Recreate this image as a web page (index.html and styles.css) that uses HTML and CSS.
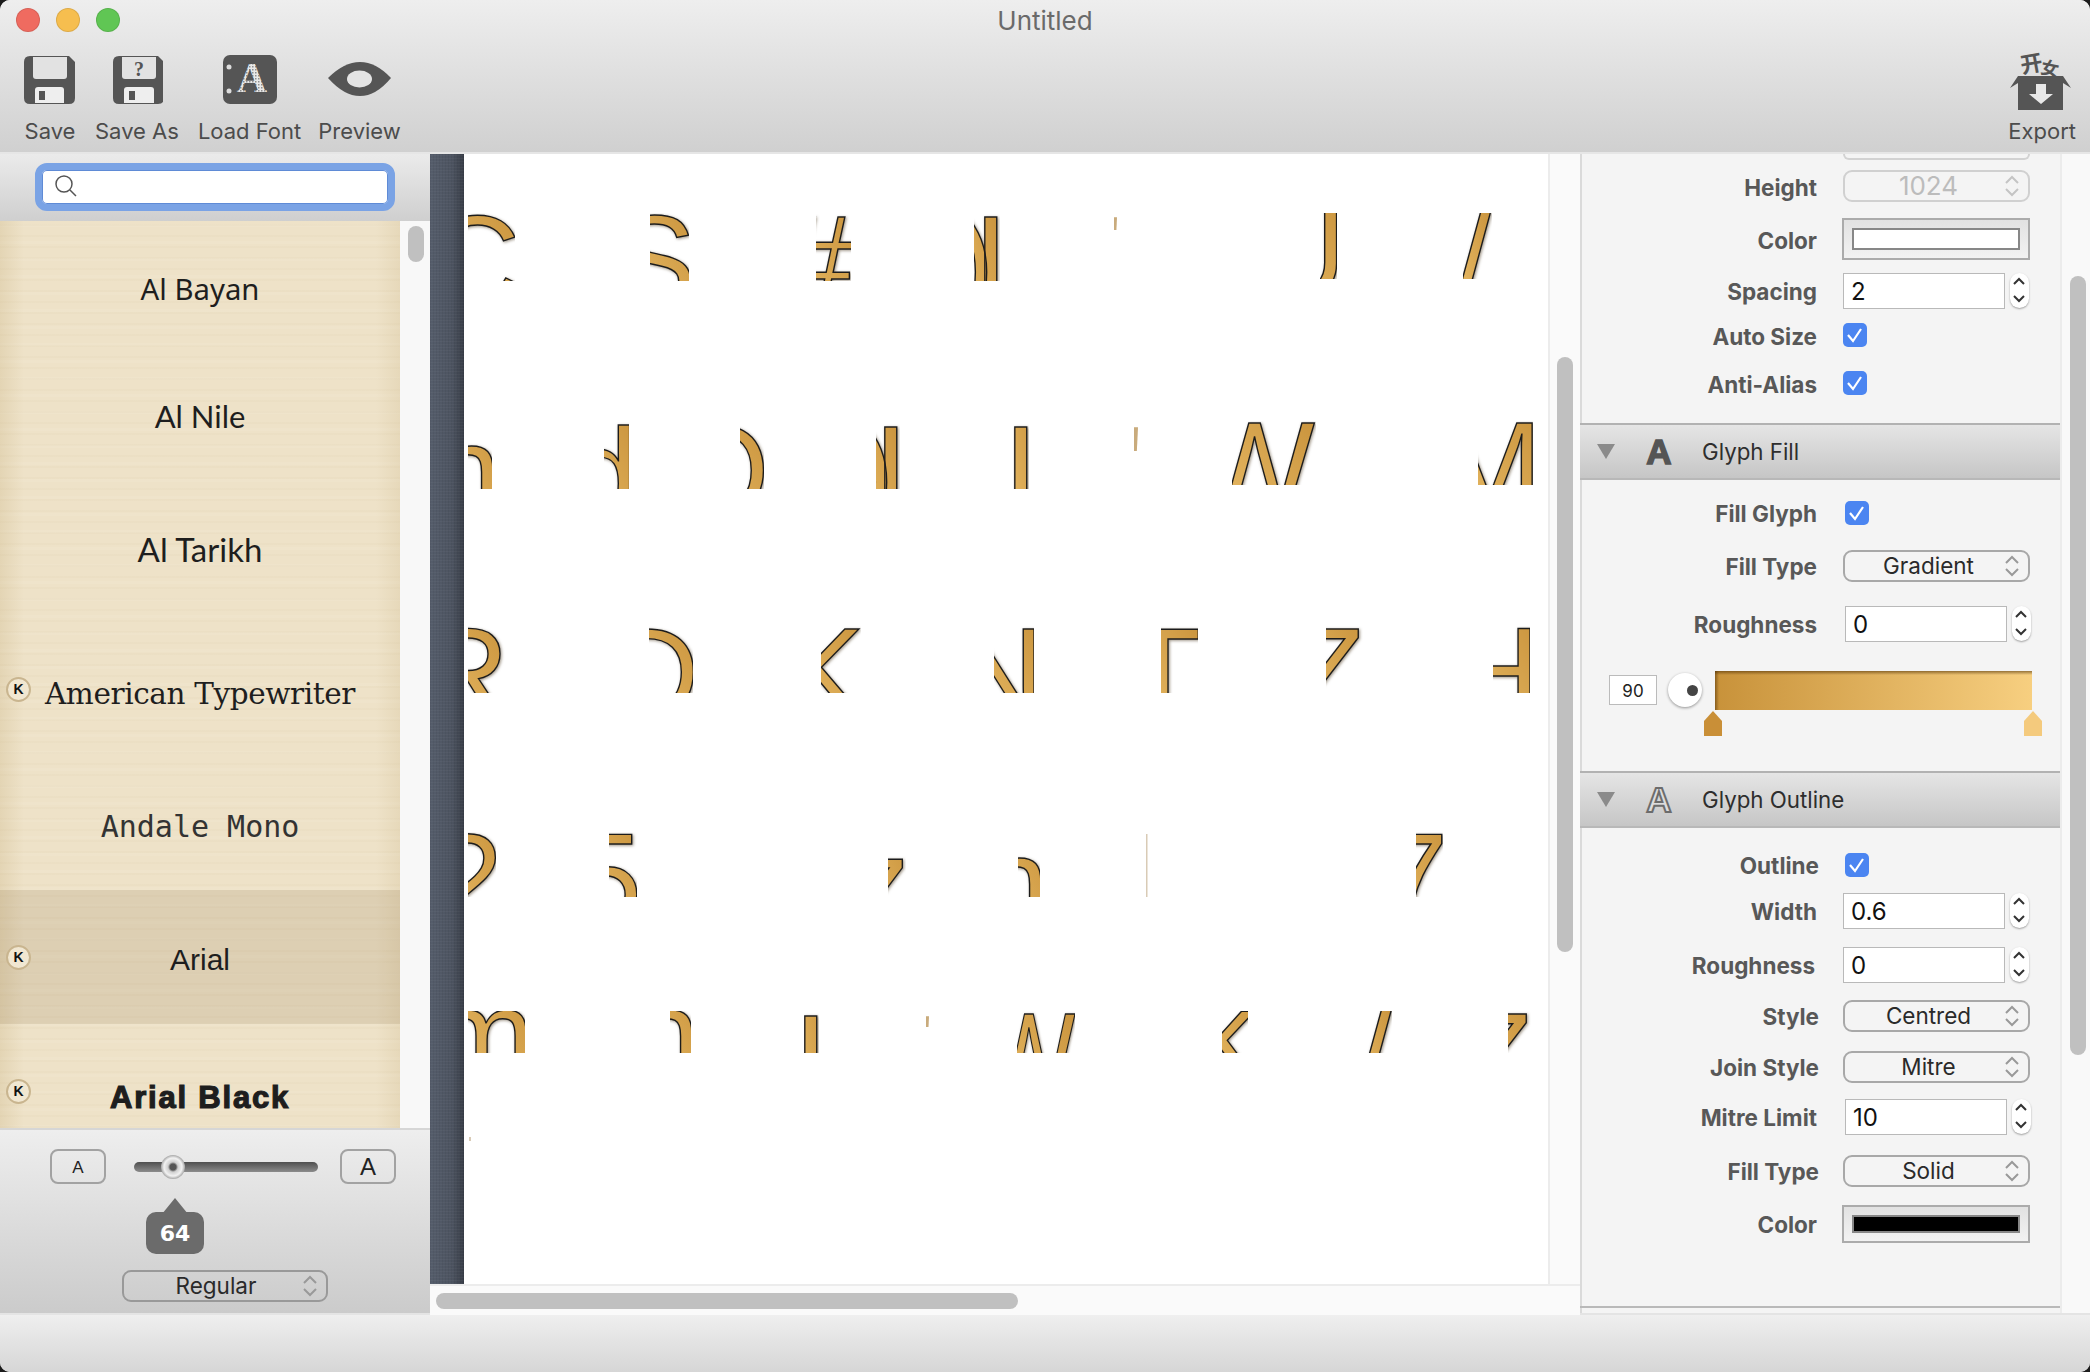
FILE: index.html
```html
<!DOCTYPE html>
<html lang="en">
<head>
  <meta charset="UTF-8">
  <title>Untitled</title>
  <link rel="stylesheet" href="styles.css">
</head>
<body>
<div class="window">

  <header class="top">
    <div class="titlebar">
      <div class="lights"><i class="red"></i><i class="amber"></i><i class="green"></i></div>
      <div class="title">Untitled</div>
    </div>
    <div class="toolbar">
      <div class="tool tool-save">
        <svg width="52" height="62" viewBox="23 48 52 62"><path fill="#555" d="M29 56H68L74 62V98Q74 104 68 104H29Q23 104 23 98V62Q23 56 29 56Z"/><path fill="#e2e2e2" d="M32 57H66V76Q66 79 63 79H35Q32 79 32 76Z"/><path fill="#eee" d="M34 90Q34 87 37 87H60Q63 87 63 90V103H34Z"/><rect fill="#555" x="38" y="91" width="6" height="9"/></svg>
        <span>Save</span>
      </div>
      <div class="tool tool-saveas">
        <svg width="52" height="62" viewBox="111 48 52 62"><path fill="#555" d="M119 56H158L164 62V98Q164 104 158 104H119Q113 104 113 98V62Q113 56 119 56Z"/><path fill="#e2e2e2" d="M122 57H156V76Q156 79 153 79H125Q122 79 122 76Z"/><text class="icon-q" x="134" y="76">?</text><path fill="#eee" d="M124 90Q124 87 127 87H151Q154 87 154 90V103H124Z"/><rect fill="#555" x="129" y="91" width="6" height="9"/></svg>
        <span>Save As</span>
      </div>
      <div class="tool tool-load">
        <svg width="56" height="62" viewBox="222 48 56 62">
          <defs>
            <pattern id="hatch" width="3" height="3" patternUnits="userSpaceOnUse">
              <rect width="3" height="3" fill="#e8e8e8"/>
              <rect width="1.500" height="1.500" fill="#8e8e8e"/>
            </pattern>
          </defs>
          <rect fill="#555" x="223" y="55" width="54" height="49" rx="7"/><circle fill="#ddd" cx="229" cy="67" r="2.500"/><circle fill="#ddd" cx="229" cy="91" r="2.500"/><text class="icon-a" x="252" y="92" fill="url(#hatch)">A</text></svg>
        <span>Load Font</span>
      </div>
      <div class="tool tool-preview">
        <svg width="65" height="62" viewBox="327 48 65 62"><path fill="#555" d="M328 78Q344 62 360 62Q376 62 391 78Q376 96 360 96Q344 96 328 78Z"/><ellipse fill="#e4e4e4" cx="359.500" cy="79" rx="12.500" ry="8.500"/></svg>
        <span>Preview</span>
      </div>
      <div class="tool tool-export">
        <svg width="64" height="62" viewBox="2010 48 64 62"><text class="icon-cjk" x="2020" y="72" transform="rotate(-10 2030 62)">开</text><text class="icon-cjk small" x="2041" y="75" transform="rotate(12 2050 68)">女</text><path fill="#555" d="M2018 76H2063L2071 88L2063 83V110H2018V83L2010 88Z"/><path fill="#e8e8e8" d="M2036 84H2046V94H2053L2041 104L2029 94H2036Z"/></svg>
        <span>Export</span>
      </div>
    </div>
  </header>

  <div class="body">

    <aside class="sidebar">
      <div class="search-zone">
        <div class="search-box">
          <svg width="24" height="24" viewBox="0 0 24 24" fill="none" stroke="#555" stroke-width="1.500"><circle cx="10" cy="10" r="8"/><line x1="16" y1="16" x2="22" y2="22"/></svg>
        </div>
      </div>
      <div class="font-list">
        <div class="paper">
          <div class="font-row"><span class="f-bayan">Al Bayan</span></div>
          <div class="font-row"><span class="f-nile">Al Nile</span></div>
          <div class="font-row"><span class="f-tarikh">Al Tarikh</span></div>
          <div class="font-row"><b class="badge">K</b><span class="f-typewriter">American Typewriter</span></div>
          <div class="font-row"><span class="f-mono">Andale Mono</span></div>
          <div class="font-row selected"><b class="badge">K</b><span class="f-arial">Arial</span></div>
          <div class="font-row"><b class="badge">K</b><span class="f-black">Arial Black</span></div>
        </div>
        <div class="list-scroll"><div class="list-thumb"></div></div>
      </div>
      <div class="size-panel">
        <div class="size-row">
          <div class="a-btn small">A</div>
          <div class="slider"><i class="knob"></i></div>
          <div class="a-btn">A</div>
        </div>
        <div class="bubble">64</div>
        <div class="popup style-popup">Regular
          <svg class="updown" width="14" height="22" viewBox="0 0 14 22" fill="none" stroke-width="2"><path d="M1 8L7 2L13 8M1 14L7 20L13 14"/></svg>
        </div>
      </div>
    </aside>

    <main class="centre">
      <div class="centre-top">
        <div class="strip"></div>
        <div class="sheet">
          <svg class="atlas" width="1084" height="1130" viewBox="464 154 1084 1130">
            <defs>
              <linearGradient id="gold" x1="0" y1="1" x2="1" y2="0">
                <stop offset="0" stop-color="#f0c570"/>
                <stop offset="1" stop-color="#c68f38"/>
              </linearGradient>
            </defs>
            <g class="glyphs" fill="url(#gold)">
              <svg x="468" y="213" width="47" height="68"><text x="-40" y="92">C</text></svg>
              <svg x="650" y="213" width="39" height="68"><text x="-39" y="92">S</text></svg>
              <svg x="816" y="213" width="35" height="68"><text x="-34" y="92">#</text></svg>
              <svg x="974" y="213" width="26" height="68"><text class="pair" x="-22" y="92">)I</text></svg>
              <svg x="1114" y="213" width="3" height="17"><text class="pale" x="-15" y="92">'</text></svg>
              <svg x="1320" y="213" width="17" height="66"><text x="-66" y="84">U</text></svg>
              <svg x="1463" y="213" width="29" height="66"><text x="-8" y="92">/</text></svg>

              <svg x="468" y="421" width="24" height="68"><text x="-38" y="94">n</text></svg>
              <svg x="604" y="421" width="25" height="68"><text x="-37" y="97">d</text></svg>
              <svg x="740" y="421" width="24" height="68"><text x="-70" y="94">O</text></svg>
              <svg x="876" y="421" width="24" height="68"><text class="pair" x="-24" y="94">)I</text></svg>
              <svg x="1013" y="421" width="16" height="68"><text x="-10" y="94">I</text></svg>
              <svg x="1134" y="421" width="5" height="30"><text class="pale" x="-14" y="94">'</text></svg>
              <svg x="1232" y="421" width="84" height="64"><text x="-38" y="90">W</text></svg>
              <svg x="1478" y="421" width="55" height="64"><text x="-42" y="90">M</text></svg>

              <svg x="468" y="626" width="40" height="67"><text x="-51" y="91">R</text></svg>
              <svg x="649" y="626" width="44" height="67"><text x="-42" y="91">D</text></svg>
              <svg x="821" y="626" width="40" height="67"><text x="-41" y="91">K</text></svg>
              <svg x="994" y="626" width="40" height="67"><text x="-42" y="91">N</text></svg>
              <svg x="1161" y="626" width="37" height="67"><text x="-38" y="91">T</text></svg>
              <svg x="1326" y="626" width="38" height="67"><text x="-39" y="91">Z</text></svg>
              <svg x="1493" y="626" width="37" height="67"><text x="-45" y="91">H</text></svg>

              <svg x="468" y="832" width="28" height="65"><text x="-36" y="91">2</text></svg>
              <svg x="609" y="832" width="28" height="65"><text x="-38" y="91">5</text></svg>
              <svg x="888" y="832" width="18" height="65"><text x="-42" y="95">z</text></svg>
              <svg x="1018" y="832" width="22" height="65"><text x="-40" y="95">n</text></svg>
              <rect class="sliver" x="1146" y="834" width="1.500" height="63"/>
              <svg x="1416" y="832" width="27" height="65"><text x="-39" y="91">7</text></svg>

              <svg x="468" y="1011" width="57" height="42"><text x="-40" y="68">m</text></svg>
              <svg x="670" y="1011" width="21" height="42"><text x="-41" y="68">n</text></svg>
              <svg x="804" y="1011" width="15" height="42"><text x="-11" y="93">I</text></svg>
              <svg x="926" y="1011" width="3" height="16"><text class="pale" x="-15" y="93">'</text></svg>
              <svg x="1017" y="1011" width="58" height="42"><text transform="scale(0.77 1)" x="-45" y="91">W</text></svg>
              <svg x="1222" y="1011" width="26" height="42"><text x="-30" y="68">k</text></svg>
              <svg x="1366" y="1011" width="26" height="42"><text x="-10" y="91">/</text></svg>
              <svg x="1508" y="1011" width="24" height="42"><text x="-53" y="91">Z</text></svg>
              <rect class="sliver" x="469" y="1137" width="2" height="4"/>
            </g>
          </svg>
        </div>
        <div class="vbar"><div class="vbar-thumb"></div></div>
      </div>
      <div class="hbar"><div class="hbar-thumb"></div></div>
    </main>

    <section class="inspector-wrap">
      <div class="inspector">
        <div class="stub"></div>

        <div class="fields fields-canvas">
          <label>Height</label>
          <div class="popup disabled">1024
            <svg class="updown" width="14" height="22" viewBox="0 0 14 22" fill="none" stroke-width="2"><path d="M1 8L7 2L13 8M1 14L7 20L13 14"/></svg>
          </div>
          <label>Color</label>
          <div class="well"><i class="swatch"></i></div>
          <label class="up">Spacing</label>
          <div class="num"><div class="field">2</div><div class="stepper"><svg width="12" height="26" viewBox="0 0 12 26" fill="none" stroke="#333" stroke-width="2"><path d="M1 7L6 2L11 7M1 19L6 24L11 19"/></svg></div></div>
          <label>Auto Size</label>
          <div class="check"><svg width="24" height="24" viewBox="0 0 24 24" fill="none" stroke="#fff" stroke-width="2.200"><path d="M5 12L10 18L18 6"/></svg></div>
          <label>Anti-Alias</label>
          <div class="check"><svg width="24" height="24" viewBox="0 0 24 24" fill="none" stroke="#fff" stroke-width="2.200"><path d="M5 12L10 18L18 6"/></svg></div>
        </div>

        <div class="sec-head">
          <i class="disclosure"></i>
          <span class="sec-icon solid">A</span>
          <span class="sec-name">Glyph Fill</span>
        </div>

        <div class="fields fields-fill">
          <label>Fill Glyph</label>
          <div class="check nudge"><svg width="24" height="24" viewBox="0 0 24 24" fill="none" stroke="#fff" stroke-width="2.200"><path d="M5 12L10 18L18 6"/></svg></div>
          <label>Fill Type</label>
          <div class="popup">Gradient
            <svg class="updown" width="14" height="22" viewBox="0 0 14 22" fill="none" stroke-width="2"><path d="M1 8L7 2L13 8M1 14L7 20L13 14"/></svg>
          </div>
          <label>Roughness</label>
          <div class="num nudge"><div class="field">0</div><div class="stepper"><svg width="12" height="26" viewBox="0 0 12 26" fill="none" stroke="#333" stroke-width="2"><path d="M1 7L6 2L11 7M1 19L6 24L11 19"/></svg></div></div>
        </div>

        <div class="gradient-row">
          <div class="angle">90</div>
          <div class="dial"><i></i></div>
          <div class="ramp-wrap">
            <div class="ramp"></div>
            <div class="stops">
              <i class="stop dark"></i>
              <i class="stop light"></i>
            </div>
          </div>
        </div>

        <div class="sec-head">
          <i class="disclosure"></i>
          <span class="sec-icon hollow">A</span>
          <span class="sec-name">Glyph Outline</span>
        </div>

        <div class="fields fields-outline">
          <label class="far">Outline</label>
          <div class="check nudge"><svg width="24" height="24" viewBox="0 0 24 24" fill="none" stroke="#fff" stroke-width="2.200"><path d="M5 12L10 18L18 6"/></svg></div>
          <label>Width</label>
          <div class="num"><div class="field">0.6</div><div class="stepper"><svg width="12" height="26" viewBox="0 0 12 26" fill="none" stroke="#333" stroke-width="2"><path d="M1 7L6 2L11 7M1 19L6 24L11 19"/></svg></div></div>
          <label class="near">Roughness</label>
          <div class="num"><div class="field">0</div><div class="stepper"><svg width="12" height="26" viewBox="0 0 12 26" fill="none" stroke="#333" stroke-width="2"><path d="M1 7L6 2L11 7M1 19L6 24L11 19"/></svg></div></div>
          <label class="far">Style</label>
          <div class="popup">Centred
            <svg class="updown" width="14" height="22" viewBox="0 0 14 22" fill="none" stroke-width="2"><path d="M1 8L7 2L13 8M1 14L7 20L13 14"/></svg>
          </div>
          <label class="far">Join Style</label>
          <div class="popup">Mitre
            <svg class="updown" width="14" height="22" viewBox="0 0 14 22" fill="none" stroke-width="2"><path d="M1 8L7 2L13 8M1 14L7 20L13 14"/></svg>
          </div>
          <label>Mitre Limit</label>
          <div class="num nudge"><div class="field">10</div><div class="stepper"><svg width="12" height="26" viewBox="0 0 12 26" fill="none" stroke="#333" stroke-width="2"><path d="M1 7L6 2L11 7M1 19L6 24L11 19"/></svg></div></div>
          <label class="far">Fill Type</label>
          <div class="popup">Solid
            <svg class="updown" width="14" height="22" viewBox="0 0 14 22" fill="none" stroke-width="2"><path d="M1 8L7 2L13 8M1 14L7 20L13 14"/></svg>
          </div>
          <label>Color</label>
          <div class="well slim"><i class="swatch black"></i></div>
        </div>

        <div class="next-head"></div>
      </div>
      <div class="insp-scroll"><div class="insp-thumb"></div></div>
    </section>

  </div>

  <footer class="status"></footer>
</div>
</body>
</html>
```

FILE: styles.css
```css
* {
  box-sizing: border-box;
}

html, body {
  margin: 0;
  height: 100%;
  background: #1c1c1c;
}

body {
  font-family: "Inter", "Noto Sans", sans-serif;
  color: #222;
}

.window {
  width: 2090px;
  height: 1372px;
  border-radius: 10px;
  overflow: hidden;
  background: #f6f6f6;
  display: flex;
  flex-direction: column;
}

/* title bar + toolbar */
.top {
  height: 154px;
  flex: none;
  background: linear-gradient(#eeeeee, #d0d0d0);
  border-bottom: 2px solid #e6e6e6;
}

.titlebar {
  height: 40px;
  position: relative;
  display: flex;
  align-items: center;
  justify-content: center;
}

.lights {
  position: absolute;
  left: 16px;
  top: 8px;
  display: flex;
  gap: 16px;
}

.lights i {
  width: 24px;
  height: 24px;
  border-radius: 50%;
  border: 1px solid rgba(0, 0, 0, 0.1);
}

.red { background: #ef6b60; }
.amber { background: #f6be4f; }
.green { background: #60c654; }

.title {
  font-size: 26px;
  color: #6a6a6a;
}

.toolbar {
  height: 112px;
  padding: 8px 14px 0 24px;
  display: flex;
  gap: 19px;
}

.tool {
  display: flex;
  flex-direction: column;
  align-items: center;
  font-size: 22px;
  color: #4c4c4c;
  line-height: 26px;
}

.tool svg {
  display: block;
  margin-bottom: 8px;
}

.tool-preview {
  margin-left: -2px;
}

.tool-export {
  margin-left: auto;
}

.icon-q {
  font: bold 20px "Liberation Serif", serif;
  fill: #555;
}

.icon-a {
  font: bold 42px "Liberation Serif", serif;
  text-anchor: middle;
}

.icon-cjk {
  font: bold 22px "Noto Sans CJK SC", sans-serif;
  fill: #555;
}

.icon-cjk.small {
  font-size: 18px;
}

/* main area */
.body {
  flex: 1;
  display: flex;
  min-height: 0;
}

.sidebar {
  width: 430px;
  flex: none;
  display: flex;
  flex-direction: column;
}

.search-zone {
  height: 67px;
  padding: 9px 35px 0;
  background: linear-gradient(#ebebeb, #cfcfcf);
}

.search-box {
  width: 360px;
  height: 48px;
  background: #fff;
  border: 7px solid #7aa3e5;
  border-radius: 12px;
  box-shadow: inset 0 0 0 1px #5f8bd6;
  padding: 4px 0 0 12px;
}

.search-box svg {
  display: block;
}

.font-list {
  height: 907px;
  display: flex;
  background: #f8f8f8;
}

.paper {
  width: 400px;
  overflow: hidden;
  background:
    linear-gradient(90deg, rgba(190, 165, 110, 0.22), transparent 6%, transparent 94%, rgba(190, 165, 110, 0.16)),
    repeating-linear-gradient(0deg, rgba(190, 170, 125, 0.05) 0 2px, transparent 2px 11px),
    repeating-linear-gradient(0deg, rgba(255, 255, 255, 0.06) 0 3px, transparent 3px 17px),
    #eee2c8;
}

.font-row {
  height: 134px;
  position: relative;
  display: flex;
  align-items: center;
  justify-content: center;
  color: #1e1e1e;
  white-space: nowrap;
}

.font-row:first-child {
  margin-top: -1px;
}

.font-row.selected {
  background: rgba(130, 104, 58, 0.15);
}

.badge {
  position: absolute;
  left: 6px;
  top: 55px;
  width: 25px;
  height: 25px;
  border-radius: 50%;
  border: 2px solid #c9b58f;
  background: #f1e7d1;
  font: bold 14px/21px "Liberation Sans", sans-serif;
  text-align: center;
  color: #111;
}

.f-bayan {
  font: 29.300px "Noto Sans", sans-serif;
  margin-top: 3px;
}

.f-nile {
  font: 31px "Lato", sans-serif;
  margin-top: -10px;
}

.f-tarikh {
  font: 33px "Lato", sans-serif;
  margin-top: -12px;
}

.f-typewriter {
  font: 29.500px "DejaVu Serif", serif;
  letter-spacing: -0.4px;
  margin-top: 10px;
}

.f-mono {
  font: 30px "DejaVu Sans Mono", monospace;
  margin-top: 6px;
  color: #333;
}

.f-arial {
  font: 30px "Liberation Sans", sans-serif;
  margin-top: 6px;
}

.f-black {
  font: bold 31px "Liberation Sans", sans-serif;
  -webkit-text-stroke: 1.2px #1e1e1e;
  letter-spacing: 1.8px;
  margin-top: 14px;
}

.list-scroll {
  width: 30px;
  padding: 5px 0 0 8px;
}

.list-thumb {
  width: 16px;
  height: 36px;
  border-radius: 8px;
  background: #c0c0c0;
}

.size-panel {
  flex: 1;
  padding: 19px 0 0;
  background: linear-gradient(#eeeeee, #cbcbcb);
  border-top: 2px solid #d6d6d6;
  border-bottom: 2px solid #e4e4e4;
}

.size-row {
  display: flex;
  align-items: center;
  padding-left: 50px;
}

.a-btn {
  width: 56px;
  height: 35px;
  border: 2px solid #a2a2a2;
  border-radius: 8px;
  text-align: center;
  font: 24px/32px "Liberation Sans", sans-serif;
  color: #222;
}

.a-btn.small {
  font-size: 17px;
  line-height: 33px;
}

.slider {
  width: 184px;
  height: 10px;
  margin: 0 22px 0 28px;
  border-radius: 5px;
  background: linear-gradient(#4f4f4f, #8c8c8c);
  position: relative;
}

.knob {
  position: absolute;
  left: 27px;
  top: -7px;
  width: 24px;
  height: 24px;
  border-radius: 50%;
  background: radial-gradient(circle, #555 0 3px, #cfcfcf 5px, #f2f2f2 9px, #a6a6a6 12px);
}

.bubble {
  position: relative;
  width: 58px;
  height: 42px;
  margin: 28px 0 0 146px;
  border-radius: 10px;
  background: #6b6b6b;
  color: #fff;
  font: bold 22px/44px "DejaVu Sans", sans-serif;
  text-align: center;
}

.bubble::before {
  content: "";
  position: absolute;
  left: 16px;
  top: -14px;
  width: 26px;
  height: 16px;
  background: #6b6b6b;
  clip-path: polygon(50% 0, 100% 100%, 0 100%);
}

.popup {
  position: relative;
  width: 187px;
  height: 32px;
  border: 2px solid #a8a8a8;
  border-radius: 9px;
  font-size: 22.500px;
  line-height: 28px;
  color: #2a2a2a;
  text-align: center;
  padding-right: 16px;
}

.updown {
  position: absolute;
  right: 9px;
  top: 3px;
  stroke: #999;
}

.style-popup {
  width: 206px;
  height: 32px;
  margin: 16px 0 0 122px;
  border-color: #999;
  padding-right: 18px;
}

/* centre */
.centre {
  width: 1150px;
  flex: none;
  display: flex;
  flex-direction: column;
}

.centre-top {
  height: 1130px;
  display: flex;
}

.strip {
  width: 34px;
  background:
    repeating-linear-gradient(0deg, rgba(255, 255, 255, 0.03) 0 1px, transparent 1px 3px),
    repeating-linear-gradient(90deg, rgba(0, 0, 0, 0.05) 0 1px, transparent 1px 3px),
    linear-gradient(90deg, #555d6b, #4d5461 65%, #383d47);
}

.sheet {
  width: 1084px;
  background: #fff;
  overflow: hidden;
}

.atlas {
  display: block;
}

.glyphs text {
  font: 128px "Liberation Sans", sans-serif;
  stroke: #1c1c1c;
  stroke-width: 1.4px;
  filter: drop-shadow(1.5px 1.5px 1.5px rgba(60, 40, 10, 0.5));
}

.glyphs .pair {
  letter-spacing: -21.600px;
}

.glyphs .pale {
  stroke: none;
  fill: #c9ab7c;
  filter: none;
}

.sliver {
  fill: #d9cbb6;
}

.vbar {
  width: 32px;
  padding: 203px 0 0 7px;
  background: #fafafa;
  border-left: 2px solid #ececec;
}

.vbar-thumb {
  width: 16px;
  height: 595px;
  border-radius: 8px;
  background: #c0c0c0;
}

.hbar {
  flex: 1;
  padding: 7px 0 0 6px;
  background: #fafafa;
  border-top: 2px solid #ececec;
}

.hbar-thumb {
  width: 582px;
  height: 16px;
  border-radius: 8px;
  background: #c0c0c0;
}

/* inspector */
.inspector-wrap {
  flex: 1;
  display: flex;
  background: #f9f9f9;
  border-bottom: 2px solid #e4e4e4;
}

.inspector {
  width: 482px;
  height: 1159px;
  background: #f4f4f4;
  border-right: 2px solid #ececec;
  box-shadow: inset 2px 0 0 #dadada;
  overflow: hidden;
}

.insp-scroll {
  flex: 1;
  padding: 122px 0 0 8px;
}

.insp-thumb {
  width: 16px;
  height: 779px;
  border-radius: 8px;
  background: #c0c0c0;
}

.stub {
  width: 187px;
  height: 6px;
  margin-left: 263px;
  border: 2px solid #d2d2d2;
  border-top: 0;
  border-radius: 0 0 8px 8px;
}

.fields {
  display: grid;
  grid-template-columns: 263px 1fr;
  align-items: center;
}

.fields label {
  text-align: right;
  padding-right: 26px;
  font-size: 22.500px;
  font-weight: 700;
  color: #585858;
}

.fields-canvas label {
  padding-top: 2px;
}

.fields label.up {
  padding-top: 0;
}

.fields label.far {
  padding-right: 24px;
}

.fields label.near {
  padding-right: 28px;
}

.fields-canvas {
  grid-template-rows: 52px 54px 50px 38px 58px;
  margin-bottom: 11px;
}

.fields-fill {
  grid-template-rows: 66px 40px 76px;
}

.fields-outline {
  grid-template-rows: 40px 52px 56px 46px 56px 44px 64px 42px;
  margin-top: 17px;
}

.disabled {
  border-color: #d0d0d0;
  color: #bcbcbc;
  font-size: 26px;
}

.disabled .updown {
  stroke: #c4c4c4;
}

.well {
  width: 188px;
  height: 42px;
  border: 2px solid #ababab;
  padding: 8px;
  background: linear-gradient(#e2e2e2, #f2f2f2);
  margin-left: -1px;
}

.well.slim {
  height: 38px;
}

.swatch {
  display: block;
  height: 100%;
  background: #fff;
  border: 2px solid #878787;
}

.swatch.black {
  background: #000;
}

.num {
  display: flex;
  gap: 5px;
}

.nudge {
  margin-left: 2px;
}

.field {
  width: 162px;
  height: 36px;
  background: #fff;
  border: 1px solid #b9b9b9;
  padding-left: 7px;
  font-size: 24px;
  line-height: 36px;
  color: #111;
}

.stepper {
  width: 19px;
  height: 35px;
  border-radius: 10px;
  background: #fff;
  box-shadow: 0 1px 2px rgba(0, 0, 0, 0.35);
  padding: 4px 0 0 3px;
}

.stepper svg {
  display: block;
}

.check {
  width: 24px;
  height: 24px;
  border-radius: 5px;
  background: #4b85f1;
}

.check svg {
  display: block;
}

.sec-head {
  height: 57px;
  display: flex;
  align-items: center;
  background: linear-gradient(#e5e5e5, #c6c6c6);
  border-top: 2px solid #b2b2b2;
  border-bottom: 2px solid #b8b8b8;
  font-size: 22.300px;
  color: #2e2e2e;
}

.disclosure {
  width: 18px;
  height: 15px;
  margin-left: 17px;
  background: #8b8b8b;
  clip-path: polygon(0 0, 100% 0, 50% 100%);
}

.sec-icon {
  width: 34px;
  margin-left: 27px;
  font: bold 35px/1 "Liberation Sans", sans-serif;
  text-align: center;
}

.sec-icon.solid {
  color: #555;
  -webkit-text-stroke: 1.5px #555;
}

.sec-icon.hollow {
  color: #ddd;
  -webkit-text-stroke: 2px #6c6c6c;
}

.sec-name {
  margin-left: 26px;
}

.gradient-row {
  height: 109px;
  display: flex;
  padding: 9px 0 0 29px;
}

.angle {
  width: 48px;
  height: 30px;
  margin-top: 4px;
  background: #fff;
  border: 1px solid #bbb;
  font-size: 17px;
  line-height: 31px;
  text-align: center;
  color: #222;
}

.dial {
  width: 34px;
  height: 34px;
  margin: 2px 0 0 11px;
  border-radius: 50%;
  background: #fff;
  box-shadow: 0 1px 3px rgba(0, 0, 0, 0.4);
  display: flex;
  align-items: center;
  justify-content: flex-end;
  padding-right: 4px;
}

.dial i {
  width: 11px;
  height: 11px;
  border-radius: 50%;
  background: #444;
}

.ramp-wrap {
  width: 317px;
  margin-left: 13px;
}

.ramp {
  height: 39px;
  background:
    linear-gradient(rgba(70, 40, 0, 0.55), transparent 4px),
    linear-gradient(90deg, rgba(70, 40, 0, 0.5), transparent 4px),
    linear-gradient(90deg, #c8923a, #f7cf80);
}

.stops {
  display: flex;
  justify-content: space-between;
  margin: 1px -10px 0 -11px;
}

.stop {
  width: 18px;
  height: 25px;
  clip-path: polygon(50% 0, 100% 40%, 100% 100%, 0 100%, 0 40%);
}

.stop.dark { background: #c98f37; }
.stop.light { background: #f4ca7d; }

.next-head {
  border-top: 2px solid #b9b9b9;
  margin-top: 61px;
}

.status {
  height: 57px;
  flex: none;
  background: linear-gradient(#efefef, #d6d6d6);
}
```
